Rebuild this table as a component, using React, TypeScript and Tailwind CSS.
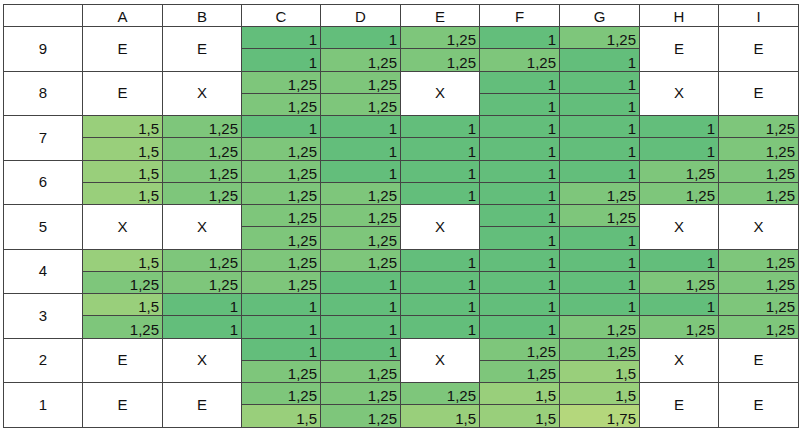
import React from "react";

type Cell = string | [number, number];

const rows: { n: number; cells: Cell[] }[] = [
  { n: 9, cells: ["E", "E", [1, 1], [1, 1.25], [1.25, 1.25], [1, 1.25], [1.25, 1], "E", "E"] },
  { n: 8, cells: ["E", "X", [1.25, 1.25], [1.25, 1.25], "X", [1, 1], [1, 1], "X", "E"] },
  { n: 7, cells: [[1.5, 1.5], [1.25, 1.25], [1, 1.25], [1, 1], [1, 1], [1, 1], [1, 1], [1, 1], [1.25, 1.25]] },
  { n: 6, cells: [[1.5, 1.5], [1.25, 1.25], [1.25, 1.25], [1, 1.25], [1, 1], [1, 1], [1, 1.25], [1.25, 1.25], [1.25, 1.25]] },
  { n: 5, cells: ["X", "X", [1.25, 1.25], [1.25, 1.25], "X", [1, 1], [1.25, 1], "X", "X"] },
  { n: 4, cells: [[1.5, 1.25], [1.25, 1.25], [1.25, 1.25], [1.25, 1], [1, 1], [1, 1], [1, 1], [1, 1.25], [1.25, 1.25]] },
  { n: 3, cells: [[1.5, 1.25], [1, 1], [1, 1], [1, 1], [1, 1], [1, 1], [1, 1.25], [1, 1.25], [1.25, 1.25]] },
  { n: 2, cells: ["E", "X", [1, 1.25], [1, 1.25], "X", [1.25, 1.25], [1.25, 1.5], "X", "E"] },
  { n: 1, cells: ["E", "E", [1.25, 1.5], [1.25, 1.25], [1.25, 1.5], [1.5, 1.5], [1.5, 1.75], "E", "E"] },
];

const colorClass: Record<string, string> = {
  "1": "bg-[#63be7b]",
  "1.25": "bg-[#7ec67b]",
  "1.5": "bg-[#99cf7b]",
  "1.75": "bg-[#b4d77c]",
};

const fmt = (v: number) => String(v).replace(".", ",");

function Num({ v }: { v: number }) {
  return (
    <div className={`${colorClass[String(v)]} flex items-end justify-end pr-[3px] pb-[1px] leading-[15px]`}>
      {fmt(v)}
    </div>
  );
}

export default function App() {
  const items: React.ReactNode[] = [];
  const headers = ["", "A", "B", "C", "D", "E", "F", "G", "H", "I"];
  headers.forEach((h, i) => {
    items.push(
      <div key={`h${i}`} className="bg-white flex items-end justify-center pb-[2px] leading-[15px]">
        {h}
      </div>
    );
  });
  rows.forEach((r) => {
    items.push(
      <div key={`r${r.n}`} className="row-span-2 bg-white flex items-center justify-center">
        {r.n}
      </div>
    );
    r.cells.forEach((c, ci) => {
      if (typeof c === "string") {
        items.push(
          <div key={`m${r.n}-${ci}`} className="row-span-2 bg-white flex items-center justify-center">
            {c}
          </div>
        );
      } else {
        items.push(<Num key={`t${r.n}-${ci}`} v={c[0]} />);
      }
    });
    r.cells.forEach((c, ci) => {
      if (typeof c !== "string") {
        items.push(<Num key={`b${r.n}-${ci}`} v={c[1]} />);
      }
    });
  });

  return (
    <div className="w-[800px] h-[430px] bg-white pl-[3px] pt-[4px] overflow-hidden">
      <div
        className="w-fit grid gap-px p-px bg-[#444444] text-[15px] text-[#111111] grid-cols-[78px_79px_78px_78px_79px_78px_79px_79px_78px_79px] grid-rows-[21px_21px_22px_21px_21px_21px_22px_21px_21px_21px_22px_21px_21px_21px_22px_21px_21px_21px_22px]"
        style={{ fontFamily: '"Liberation Sans", Arial, sans-serif' }}
      >
        {items}
      </div>
    </div>
  );
}
